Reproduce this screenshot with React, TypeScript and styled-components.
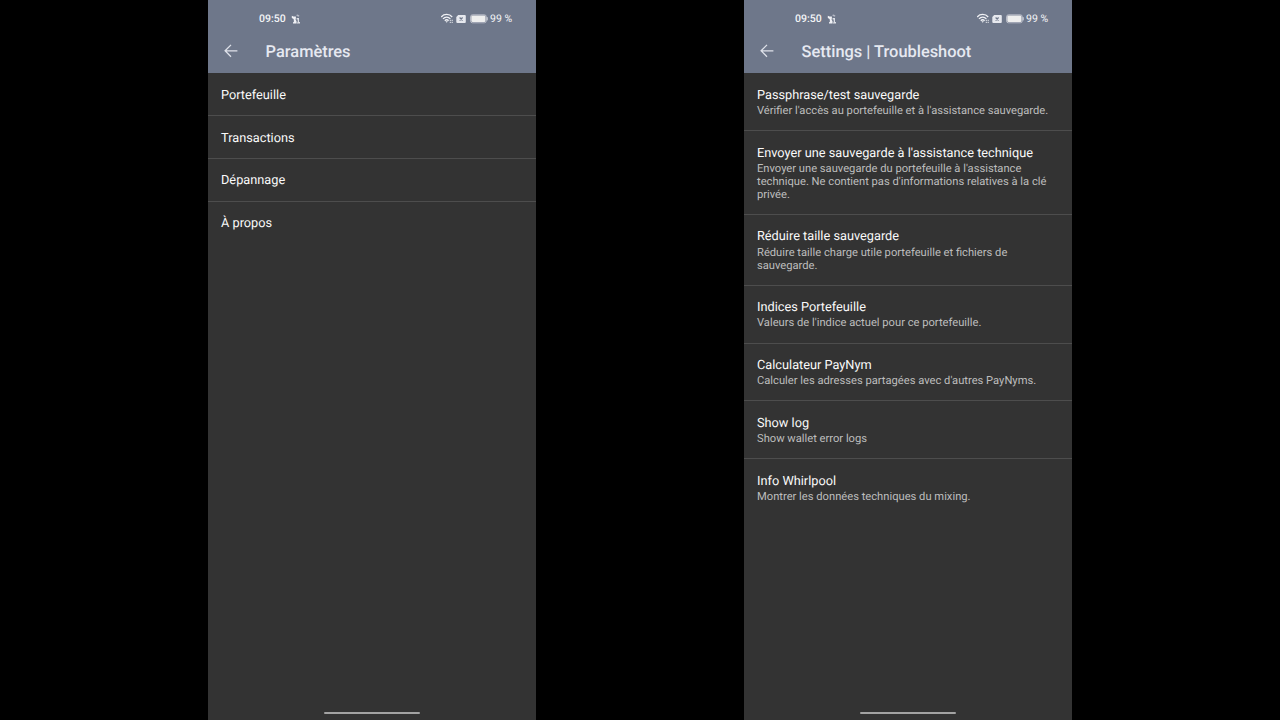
import React from 'react';
import styled, { createGlobalStyle } from 'styled-components';

const GlobalStyle = createGlobalStyle`
  * { box-sizing: border-box; }
  html, body { margin: 0; padding: 0; background: #000; }
  body {
    font-family: Roboto, "Liberation Sans", sans-serif;
    text-rendering: geometricPrecision;
    overflow: hidden;
  }
`;

const Stage = styled.main`
  display: flex;
  justify-content: center;
  gap: 208px;
  width: 1280px;
  height: 720px;
  background: #000;
`;

const Phone = styled.section`
  display: flex;
  flex-direction: column;
  width: 328px;
  height: 720px;
  background: #333333;
`;

const Header = styled.header`
  height: 72.7px;
  flex: none;
  background: #6e778a;
`;

const StatusBar = styled.div`
  display: flex;
  align-items: center;
  height: 29px;
  padding: 9px 24px 0 51px;
  color: #f4f5f8;
  font-size: 10.5px;
  line-height: 20px;
`;

const Clock = styled.span`
  width: 32px;
  font-weight: 500;
  font-size: 10.5px;
`;

const StatusIcons = styled.div`
  display: flex;
  align-items: center;
  margin-left: auto;
`;

const Battery = styled.span`
  width: 22px;
  white-space: nowrap;
  letter-spacing: 0.05px;
`;

const TitleBar = styled.div`
  display: flex;
  align-items: center;
  height: 43px;
  padding-left: 15px;
`;

const Title = styled.h1`
  margin: 0 0 0 26.6px;
  padding-top: 4px;
  color: #e6e9f1;
  font-size: 16.4px;
  font-weight: 500;
  line-height: 20px;
`;

const List = styled.ul`
  flex: 1;
  margin: 0;
  padding: 0.9px 0 0;
  list-style: none;
`;

const Row = styled.li`
  padding: 14.4px 13px 12.15px;
  border-bottom: 1px solid #4d4d4d;
  &:last-child { border-bottom: 0; }
`;

const Label = styled.div`
  color: #fafafa;
  font-size: 12.75px;
  line-height: 15.2px;
`;

const Summary = styled.div`
  padding: 2.1px 0 0;
  color: #bdbdbd;
  font-size: 11.18px;
  line-height: 12.95px;
`;

const HomeBar = styled.div`
  width: 96px;
  height: 2px;
  margin: 0 auto 6px;
  border-radius: 1px;
  background: #a3a3a3;
`;

const BackIcon = () => (
  <svg width="16" height="16" viewBox="0 0 16 16" fill="none" stroke="#dfe2ea" strokeWidth="1.3">
    <path d="M14.4 7.8H2.5M8 1.9L2.1 7.8L8 13.7" />
  </svg>
);

const NotificationIcon = () => (
  <svg width="10" height="12" viewBox="0 0 10 12" fill="#f0f1f5">
    <path d="M.8 2.8L3.2 3.8L4.2 3L5 4.4L4.6 6.5L5.6 8.4V10.6H2V9.6L3 8.4L2.6 6L.8 5Z" />
    <path d="M5 2L6.8 1.4L8.5 2.8L7.8 3.8L6.4 3.3Z" opacity=".55" />
    <path d="M5.6 5H8V9H9V10.6H6V9.6H6.7V6.5H5.6Z" opacity=".85" />
  </svg>
);

const WifiIcon = () => (
  <svg width="13" height="12" viewBox="0 0 13 12" fill="none" stroke="#f0f1f5" strokeWidth="1.3">
    <path d="M.2 4C3 .6 8.4 .6 11.2 4M2 5.9C4.1 3.5 7.3 3.5 9.4 5.9M3.8 7.7C5 6.4 6.4 6.4 7.6 7.7" />
    <path d="M4.5 8.3H6.9L5.7 9.8Z" fill="#f0f1f5" stroke="none" />
    <path d="M9.3 6.8V8M11.2 6.8V8M9.3 8.8V10M11.2 8.8V10" strokeWidth="1.1" opacity=".85" />
  </svg>
);

const NoSimIcon = () => (
  <svg width="10" height="10" viewBox="0 0 10 10">
    <path d="M2.2 1H8.8Q9.8 1 9.8 1.9V8.1Q9.8 9 8.8 9H1.3Q.3 9 .3 8.1V2.9Z" fill="#e6e8ee" />
    <path d="M3.6 3.5L6.6 6.5M6.6 3.5L3.6 6.5" stroke="#6e778a" strokeWidth="1.2" />
  </svg>
);

const BatteryIcon = () => (
  <svg width="18" height="10" viewBox="0 0 18 10">
    <rect x=".5" y=".8" width="15.8" height="8" rx="2" fill="none" stroke="#c9ccd5" strokeWidth=".8" />
    <rect x="1.3" y="1.6" width="14.2" height="6.4" rx="1.2" fill="#eeeeee" />
    <path d="M17.2 3.2V6.4" stroke="#d5d8df" strokeWidth="1" />
  </svg>
);

const IconSlot = styled.span<{ $gap: number }>`
  display: flex;
  margin-right: ${(p) => p.$gap}px;
`;

interface Entry {
  label: string;
  summary?: string;
}

const settings: Entry[] = [
  { label: 'Portefeuille' },
  { label: 'Transactions' },
  { label: 'Dépannage' },
  { label: 'À propos' },
];

const troubleshoot: Entry[] = [
  { label: 'Passphrase/test sauvegarde', summary: "Vérifier l'accès au portefeuille et à l'assistance sauvegarde." },
  {
    label: "Envoyer une sauvegarde à l'assistance technique",
    summary: "Envoyer une sauvegarde du portefeuille à l'assistance technique. Ne contient pas d'informations relatives à la clé privée.",
  },
  { label: 'Réduire taille sauvegarde', summary: 'Réduire taille charge utile portefeuille et fichiers de sauvegarde.' },
  { label: 'Indices Portefeuille', summary: "Valeurs de l'indice actuel pour ce portefeuille." },
  { label: 'Calculateur PayNym', summary: "Calculer les adresses partagées avec d'autres PayNyms." },
  { label: 'Show log', summary: 'Show wallet error logs' },
  { label: 'Info Whirlpool', summary: 'Montrer les données techniques du mixing.' },
];

const Screen = ({ title, entries }: { title: string; entries: Entry[] }) => (
  <Phone>
    <Header>
      <StatusBar>
        <Clock>09:50</Clock>
        <NotificationIcon />
        <StatusIcons>
          <IconSlot $gap={2}><WifiIcon /></IconSlot>
          <IconSlot $gap={4}><NoSimIcon /></IconSlot>
          <IconSlot $gap={2}><BatteryIcon /></IconSlot>
          <Battery>99 %</Battery>
        </StatusIcons>
      </StatusBar>
      <TitleBar>
        <BackIcon />
        <Title>{title}</Title>
      </TitleBar>
    </Header>
    <List>
      {entries.map((e) => (
        <Row key={e.label}>
          <Label>{e.label}</Label>
          {e.summary && <Summary>{e.summary}</Summary>}
        </Row>
      ))}
    </List>
    <HomeBar />
  </Phone>
);

export default function App() {
  return (
    <>
      <GlobalStyle />
      <Stage>
        <Screen title="Paramètres" entries={settings} />
        <Screen title="Settings | Troubleshoot" entries={troubleshoot} />
      </Stage>
    </>
  );
}
